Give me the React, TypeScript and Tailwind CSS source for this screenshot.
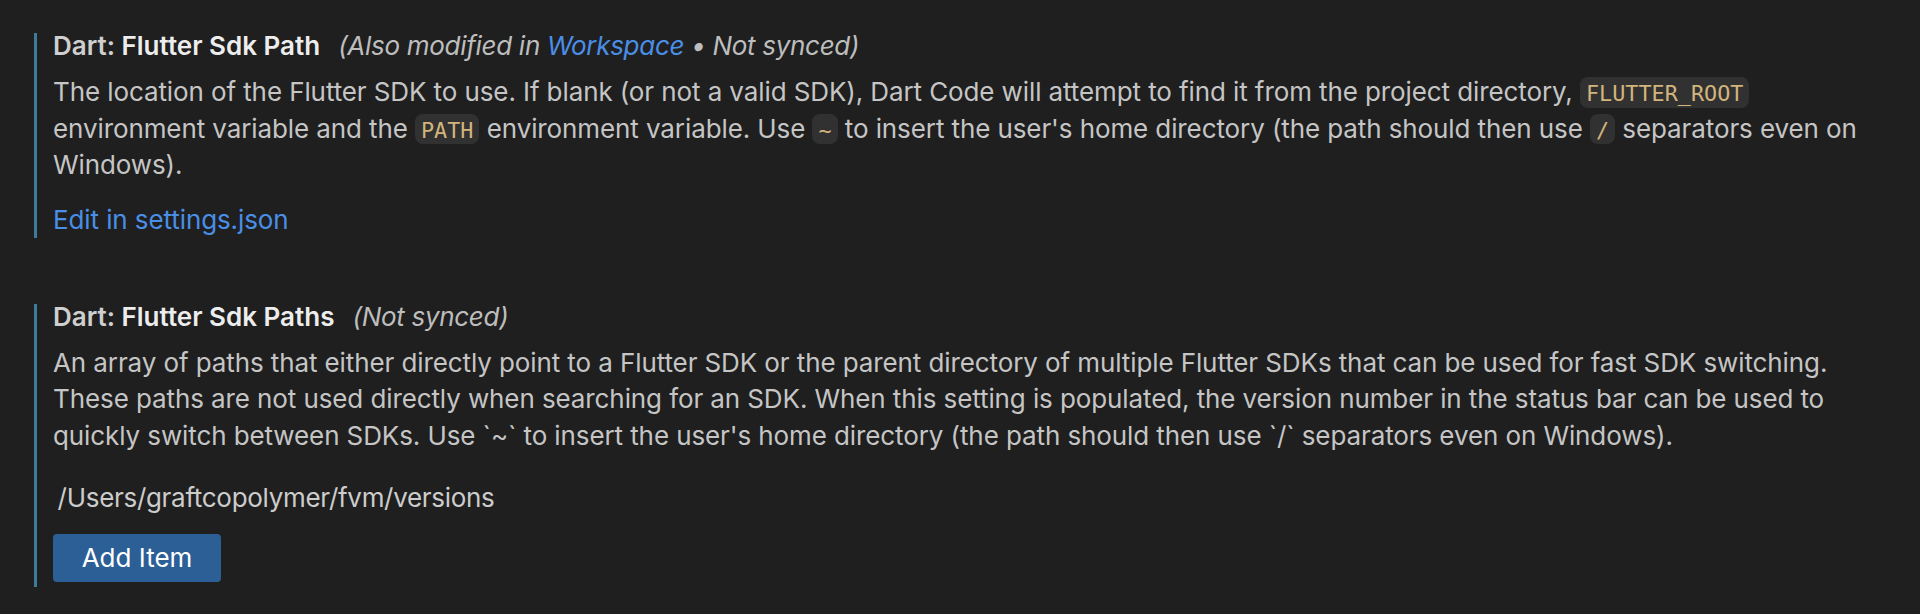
import React from "react";

const Code = ({ children }: { children: React.ReactNode }) => (
  <span className="inline-block rounded-[8px] bg-[#313131] px-[6px] pt-[4px] pb-[0.5px] align-baseline font-['DejaVu_Sans_Mono','Liberation_Mono',monospace] text-[21.8px] leading-[26px] tracking-normal text-[#d2b47c]">
    {children}
  </span>
);

export default function App() {
  return (
    <div className="min-h-[614px] w-full bg-[#1f1f1f] pl-[34px] pt-[33px] font-['Inter','Noto_Sans',sans-serif] text-[26px] tracking-[-0.1px] text-[#c5c5c5]">
      <div className="border-l-[3px] border-[#3c7b9a] pl-[16px]">
        <div className="leading-[26px] whitespace-nowrap">
          <span className="font-semibold tracking-normal text-[#cfcfcf]">Dart: </span>
          <span className="font-semibold tracking-normal text-[#ededed]">Flutter Sdk Path</span>
          <span className="ml-[18px] italic tracking-[-0.3px] text-[#bdbdbd]">
            (Also modified in <span className="text-[#4a8ee6]">Workspace</span> • Not synced)
          </span>
        </div>
        <div className="mt-[15px] leading-[36.7px] whitespace-nowrap">
          The location of the Flutter SDK to use. If blank (or not a valid SDK), Dart Code will attempt to find it from the project directory, <Code>FLUTTER_ROOT</Code>
          <br />
          environment variable and the <Code>PATH</Code> environment variable. Use <Code>~</Code> to insert the user's home directory (the path should then use <Code>/</Code> separators even on
          <br />
          Windows).
        </div>
        <div className="mt-[17.5px] leading-[36.7px] text-[#4a8ee6]">Edit in settings.json</div>
      </div>

      <div className="mt-[65.6px] border-l-[3px] border-[#3c7b9a] pl-[16px] pb-[5.7px]">
        <div className="leading-[26px] whitespace-nowrap">
          <span className="font-semibold tracking-normal text-[#cfcfcf]">Dart: </span>
          <span className="font-semibold tracking-normal text-[#ededed]">Flutter Sdk Paths</span>
          <span className="ml-[18px] italic tracking-[-0.3px] text-[#bdbdbd]">(Not synced)</span>
        </div>
        <div className="mt-[14.6px] leading-[36.7px] whitespace-nowrap">
          An array of paths that either directly point to a Flutter SDK or the parent directory of multiple Flutter SDKs that can be used for fast SDK switching.
          <br />
          These paths are not used directly when searching for an SDK. When this setting is populated, the version number in the status bar can be used to
          <br />
          quickly switch between SDKs. Use `~` to insert the user's home directory (the path should then use `/` separators even on Windows).
        </div>
        <div className="mt-[25px] pl-[4.6px] leading-[36.7px] tracking-[-0.3px] text-[#cccccc]">/Users/graftcopolymer/fvm/versions</div>
        <button className="mt-[17.7px] flex h-[47.7px] w-[168px] items-center justify-center rounded-[4px] bg-[#2c5f96] text-[26px] leading-[26px] tracking-normal text-white">
          Add Item
        </button>
      </div>
    </div>
  );
}
